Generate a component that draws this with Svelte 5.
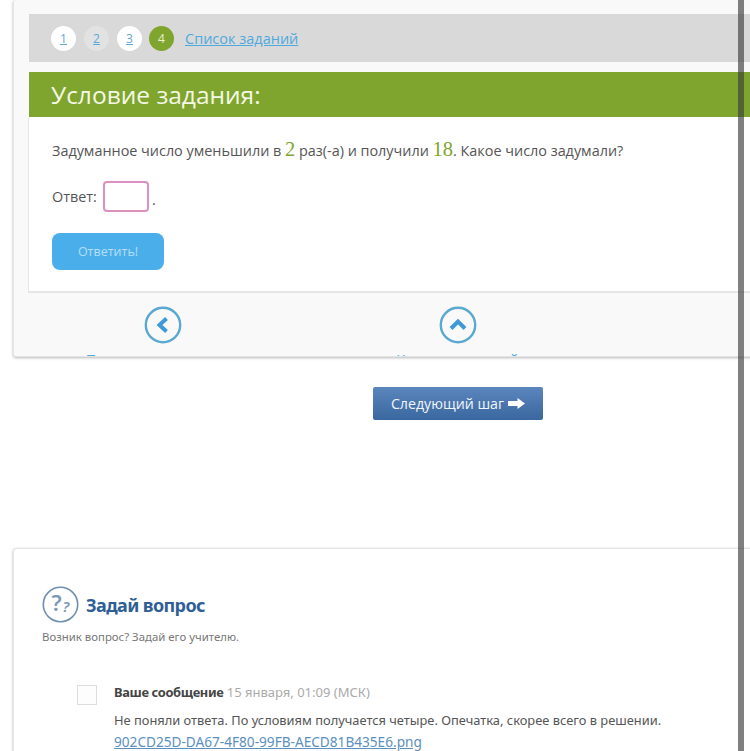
<script>
  // Task steps shown in the top bar
  const steps = [
    { label: "1", state: "" },
    { label: "2", state: "seen" },
    { label: "3", state: "" },
    { label: "4", state: "current" },
  ];
</script>

<div class="page">
  <section class="card task-card">
    <div class="steps">
      {#each steps as step}
        <a class="step {step.state}" href="#step">{step.label}</a>
      {/each}
      <a class="task-list" href="#list">Список заданий</a>
    </div>

    <h2 class="task-title">Условие задания:</h2>

    <div class="task-body">
      <p class="question">
        Задуманное число уменьшили в <span class="num">2</span> раз(-а) и получили <span class="num">18</span>. Какое число задумали?
      </p>
      <div class="answer">
        <span>Ответ:</span>
        <input class="answer-input" type="text" />
        <span class="dot">.</span>
      </div>
      <button class="submit">Ответить!</button>
    </div>

    <nav class="task-nav">
      <a href="#prev">
        <svg width="38" height="38" viewBox="0 0 38 38">
          <circle cx="19" cy="19" r="17.2" fill="none" stroke="#5ba8d0" stroke-width="2.4" />
          <path d="M22.5 12.5 L15.5 19 L22.5 25.5" fill="none" stroke="#3f9ad8" stroke-width="4" />
        </svg>
        <span>Предыдущее задание</span>
      </a>
      <a href="#up">
        <svg width="38" height="38" viewBox="0 0 38 38">
          <circle cx="19" cy="19" r="17.2" fill="none" stroke="#5ba8d0" stroke-width="2.4" />
          <path d="M12 22.5 L19 15.5 L26 22.5" fill="none" stroke="#3f9ad8" stroke-width="4" />
        </svg>
        <span>К списку заданий</span>
      </a>
    </nav>
  </section>

  <div class="next-row">
    <button class="next">
      Следующий шаг
      <svg width="17" height="11" viewBox="0 0 17 11"><path d="M0 3h9.5V0L17 5.5 9.5 11V8H0z" fill="#fff" /></svg>
    </button>
  </div>

  <section class="card ask-card">
    <div class="ask-head">
      <svg width="37" height="37" viewBox="0 0 37 37">
        <circle cx="18.5" cy="18.5" r="17.2" fill="none" stroke="#6f8fb0" stroke-width="1.6" />
        <text x="9.5" y="25" class="q-big">?</text>
        <text x="20.5" y="26" class="q-small">?</text>
      </svg>
      <h3>Задай вопрос</h3>
    </div>
    <p class="ask-hint">Возник вопрос? Задай его учителю.</p>

    <div class="message">
      <div class="avatar"></div>
      <div class="message-text">
        <div class="meta"><b>Ваше сообщение</b> <span>15 января, 01:09 (МСК)</span></div>
        <p>Не поняли ответа. По условиям получается четыре. Опечатка, скорее всего в решении.</p>
        <a href="#file">902CD25D-DA67-4F80-99FB-AECD81B435E6.png</a>
      </div>
    </div>
  </section>

  <!-- grey strip lying over the page on the right -->
  <div class="strip"></div>
</div>

<style>
  :global(body) {
    margin: 0;
    background: #fff;
  }

  .page {
    position: relative;
    width: 750px;
    height: 751px;
    overflow: hidden;
    font-family: "Open Sans", sans-serif;
    color: #555;
  }

  .card {
    width: 800px;
    margin-left: 13px;
    border: 1px solid #e4e4e4;
    border-radius: 3px;
    box-shadow: 0 1px 3px rgba(0, 0, 0, 0.28);
    box-sizing: border-box;
  }

  .task-card {
    height: 357px;
    padding: 14px 0 0 15px;
    background: #f9f9f9;
    border-top: 0;
    overflow: hidden;
  }

  .steps {
    display: flex;
    align-items: center;
    gap: 8px;
    height: 48px;
    padding-left: 22px;
    background: #d9d9d9;
  }

  .step {
    width: 25px;
    height: 25px;
    border-radius: 50%;
    background: #fff;
    color: #5ba8d8;
    font-size: 12px;
    line-height: 25px;
    text-align: center;
  }

  .step.seen {
    background: #e2e2e2;
  }

  .step.current {
    margin-left: -1px;
    background: #7fa52e;
    color: #e8efd4;
    text-decoration: none;
  }

  .task-list {
    margin-left: 3px;
    color: #4fa9dd;
    font-size: 14.5px;
  }

  .task-title {
    margin: 10px 0 0;
    padding-left: 22px;
    height: 45px;
    background: #7fa52e;
    color: #f4f8e6;
    font-size: 24.5px;
    font-weight: 400;
    line-height: 46px;
  }

  .task-body {
    height: 176px;
    padding: 22px 0 0 23px;
    background: #fff;
    border-bottom: 2px solid #e6e6e6;
    border-left: 1px solid #e6e6e6;
    margin-left: -1px;
    box-sizing: border-box;
    font-size: 14.4px;
  }

  .question {
    margin: 0;
    line-height: 21px;
    white-space: nowrap;
  }

  .num {
    color: #7fa52e;
    font-family: "Liberation Serif", serif;
    font-size: 20.5px;
  }

  .answer {
    display: flex;
    align-items: center;
    gap: 6px;
    margin-top: 20px;
  }

  .answer-input {
    width: 46px;
    height: 31px;
    padding: 0;
    border: 2px solid #dd8fc0;
    border-radius: 4px;
    background: #fff;
    box-sizing: border-box;
  }

  .dot {
    margin: 6px 0 0 -3px;
  }

  .submit {
    display: block;
    width: 112px;
    height: 37px;
    margin-top: 21px;
    border: 0;
    border-radius: 8px;
    background: #4aaeea;
    color: #b5def7;
    font: 12.5px "Open Sans", sans-serif;
  }

  .task-nav {
    display: grid;
    grid-template-columns: 295px 295px;
    margin-left: -14px;
    padding-top: 13px;
  }

  .task-nav a {
    display: flex;
    flex-direction: column;
    align-items: center;
    color: #4fa9dd;
    font-size: 14.5px;
    white-space: nowrap;
  }

  .task-nav span {
    margin-top: 6px;
  }

  .next-row {
    height: 191px;
    padding: 30px 0 0 373px;
    box-sizing: border-box;
  }

  .next {
    display: flex;
    align-items: center;
    justify-content: center;
    gap: 4px;
    width: 170px;
    height: 33px;
    padding: 0 0 1px;
    border: 0;
    border-radius: 2px;
    background: linear-gradient(#5b86bd, #3a679f);
    color: #f2f6fb;
    font: 14.2px "Open Sans", sans-serif;
  }

  .ask-card {
    height: 240px;
    padding: 37px 0 0 28px;
    background: #fff;
  }

  .ask-head {
    display: flex;
    align-items: center;
    gap: 7px;
  }

  .q-big {
    font: 600 22px "Noto Sans", sans-serif;
    fill: #7b9ab8;
  }

  .q-small {
    font: italic 600 15px "Noto Sans", sans-serif;
    fill: #7b9ab8;
  }

  .ask-head h3 {
    margin: 0;
    color: #2f5f96;
    font: 700 18px "Noto Sans", sans-serif;
    letter-spacing: -0.6px;
  }

  .ask-hint {
    margin: 6px 0 0;
    color: #777;
    font: 11.4px "Noto Sans", sans-serif;
  }

  .message {
    display: flex;
    gap: 17px;
    margin: 39px 0 0 35px;
    font-family: "Noto Sans", sans-serif;
    font-size: 12.87px;
  }

  .avatar {
    flex: none;
    width: 18px;
    height: 18px;
    margin-top: 2px;
    border: 1px solid #ddd;
    background: #fdfdfd;
  }

  .meta {
    color: #aaa;
  }

  .meta b {
    color: #444;
    letter-spacing: -0.35px;
  }

  .meta span {
    font-size: 13px;
  }

  .message-text p {
    margin: 10px 0 3px;
    color: #555;
  }

  .message-text a {
    color: #5a8fc0;
    font-size: 13.63px;
  }

  .strip {
    position: absolute;
    top: 0;
    bottom: 0;
    left: 738px;
    width: 6px;
    background: rgba(60, 60, 60, 0.65);
  }
</style>
